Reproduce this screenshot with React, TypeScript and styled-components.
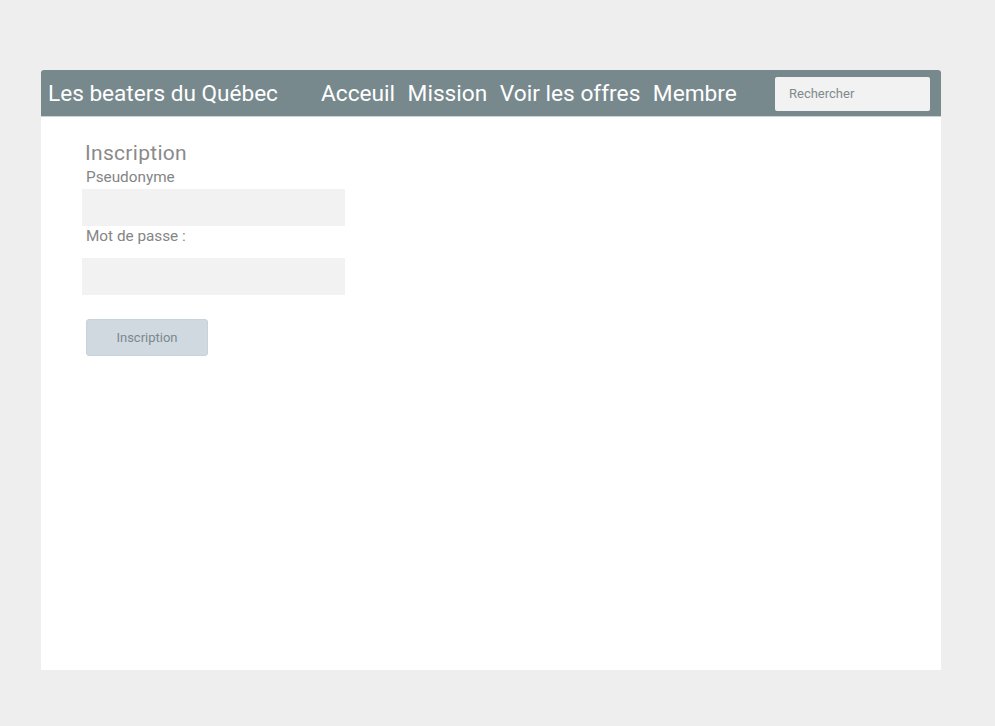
import React from "react";
import styled, { createGlobalStyle } from "styled-components";

const Global = createGlobalStyle`
  html, body { margin: 0; padding: 0; background: #eeeeee; }
  body { font-family: Roboto, "Noto Sans", sans-serif; }
  * { box-sizing: border-box; }
`;

const Page = styled.div`
  padding: 70px 0 56px 41px;
`;

const Card = styled.div`
  width: 900px;
  height: 600px;
  background: #ffffff;
  border-radius: 3px 3px 0 0;
  display: flex;
  flex-direction: column;
`;

const Header = styled.header`
  height: 47px;
  background: #77898d;
  border-bottom: 1px solid #c9d2d5;
  border-radius: 3px 3px 0 0;
  display: flex;
  align-items: center;
  padding: 0 11px 0 7px;
`;

const Brand = styled.div`
  color: #ffffff;
  font-size: 22.6px;
  white-space: nowrap;
`;

const Nav = styled.nav`
  display: flex;
  gap: 12.5px;
  margin-left: 43px;
`;

const NavLink = styled.a`
  color: #ffffff;
  font-size: 22.7px;
  text-decoration: none;
  white-space: nowrap;
`;

const Search = styled.input`
  margin-left: auto;
  width: 155px;
  height: 34px;
  background: #f2f2f2;
  border: none;
  border-radius: 2px;
  padding: 0 14px;
  font-family: Roboto, sans-serif;
  font-size: 13px;
  color: #7f8a8e;
  outline: none;
  margin-top: 1px;
  &::placeholder { color: #7f8a8e; }
`;

const Body = styled.main`
  padding: 24px 0 0 41px;
  display: flex;
  flex-direction: column;
  align-items: flex-start;
`;

const Title = styled.h1`
  margin: 0 0 0 3px;
  font-weight: 400;
  font-size: 21px;
  letter-spacing: 0.3px;
  line-height: 25px;
  color: #8a8a8a;
`;

const Label = styled.label<{ $top?: number }>`
  display: block;
  margin: ${(p) => p.$top ?? 0}px 0 0 4px;
  font-size: 15.3px;
  line-height: 18px;
  color: #858585;
`;

const Field = styled.input<{ $top: number }>`
  width: 263px;
  height: 37px;
  margin-top: ${(p) => p.$top}px;
  background: #f2f2f2;
  border: none;
  outline: none;
`;

const Button = styled.button`
  margin: 24px 0 0 4px;
  width: 122px;
  height: 37px;
  background: #d0d9df;
  border: 1px solid #c8d2d9;
  border-radius: 3px;
  font-family: Roboto, sans-serif;
  font-size: 13px;
  color: #7b8890;
`;

export default function App() {
  return (
    <Page>
      <Global />
      <Card>
        <Header>
          <Brand>Les beaters du Québec</Brand>
          <Nav>
            <NavLink>Acceuil</NavLink>
            <NavLink>Mission</NavLink>
            <NavLink>Voir les offres</NavLink>
            <NavLink>Membre</NavLink>
          </Nav>
          <Search placeholder="Rechercher" />
        </Header>
        <Body>
          <Title>Inscription</Title>
          <Label $top={2}>Pseudonyme</Label>
          <Field $top={3} />
          <Label $top={1}>Mot de passe :</Label>
          <Field $top={13} />
          <Button>Inscription</Button>
        </Body>
      </Card>
    </Page>
  );
}
